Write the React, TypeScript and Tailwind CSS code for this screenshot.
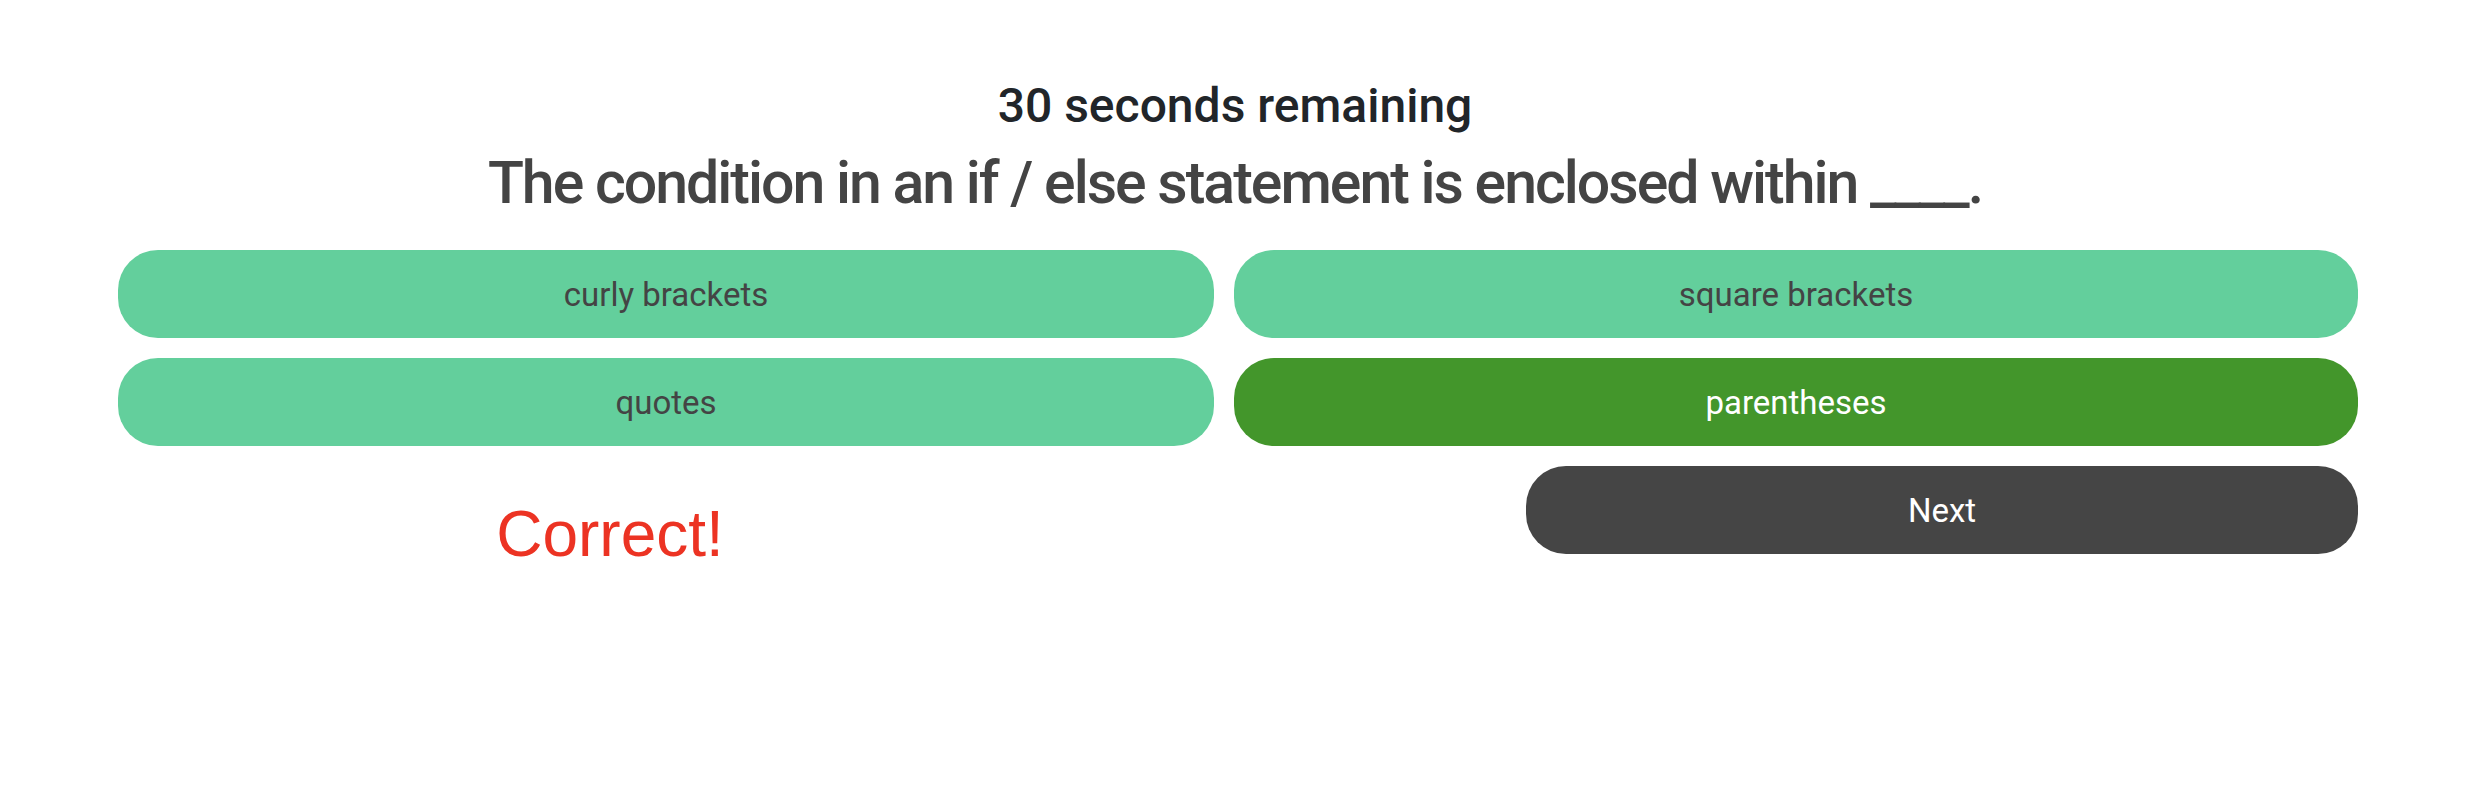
import React from "react";

export default function App() {
  const btn =
    "h-[88px] rounded-[40px] flex items-center justify-center text-[33px] leading-none";
  return (
    <div className="w-[2470px] h-[808px] bg-white font-['Roboto',sans-serif]">
      <div className="flex flex-col items-center pt-[82px]">
        <div className="text-[48px] leading-[48px] font-medium text-[#212529]">
          30 seconds remaining
        </div>
        <div className="mt-[23px] text-[59px] leading-[59px] font-medium tracking-[-2px] text-[#444444]">
          The condition in an if / else statement is enclosed within ____.
        </div>
      </div>
      <div className="ml-[118px] w-[2240px] mt-[38px]">
        <div className="grid grid-cols-[1096px_1124px] gap-[20px]">
          <div className={`${btn} bg-[#63cf9c] text-[#444444]`}>curly brackets</div>
          <div className={`${btn} bg-[#63cf9c] text-[#444444]`}>square brackets</div>
          <div className={`${btn} bg-[#63cf9c] text-[#444444]`}>quotes</div>
          <div className={`${btn} bg-[#43962b] text-white`}>parentheses</div>
        </div>
        <div className="flex mt-[20px]">
          <div className="w-[984px] flex justify-center pt-[36px]">
            <span className="font-['Liberation_Sans',sans-serif] text-[64px] leading-[64px] text-[#ec3323]">
              Correct!
            </span>
          </div>
          <div className={`${btn} ml-auto w-[832px] bg-[#454545] text-white`}>Next</div>
        </div>
      </div>
    </div>
  );
}
